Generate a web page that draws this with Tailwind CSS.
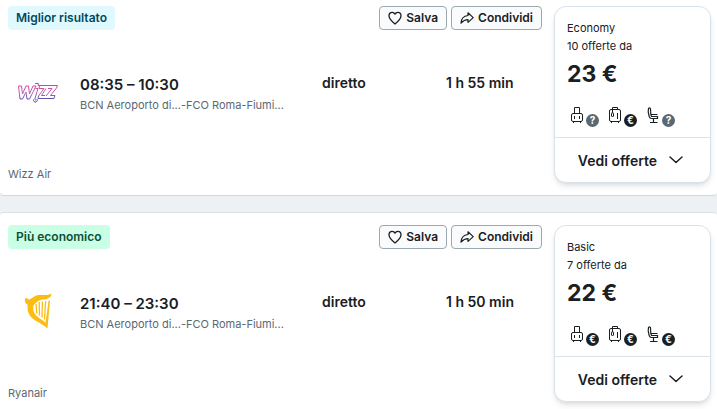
<!DOCTYPE html>
<html lang="it">
<head>
<meta charset="utf-8">
<meta name="viewport" content="width=device-width, initial-scale=1">
<title>Voli</title>
<script src="https://cdn.jsdelivr.net/npm/@tailwindcss/browser@4"></script>
</head>
<body class="bg-[#edf1f4] font-['Inter','Liberation_Sans',sans-serif] text-[#192024]">
<svg class="hidden" aria-hidden="true">
  <symbol id="heart" viewBox="0 0 14 14"><path d="M7 13C4.500 11 1 8.200 1 4.800C1 2.600 2.500 1.300 4.200 1.300C5.500 1.300 6.500 2 7 3.200C7.500 2 8.500 1.300 9.800 1.300C11.500 1.300 13 2.600 13 4.800C13 8.200 9.500 11 7 13Z" fill="none" stroke="currentColor" stroke-width="1.300" stroke-linejoin="round"/></symbol>
  <symbol id="share" viewBox="0 0 14 14"><path d="M8 1.800L13.200 6.600L8 11.400V8.700C4.800 8.700 3 10 1 12.200C1.200 8 3.500 4.900 8 4.500Z" fill="none" stroke="currentColor" stroke-width="1.200" stroke-linejoin="round"/></symbol>
  <symbol id="bag" viewBox="0 0 13 18"><g fill="none" stroke="currentColor"><path d="M4.500 7V1.500H9.500V7"/><rect x="1.500" y="7.500" width="11" height="8" rx="1.500"/><path d="M4.500 10V13M9.500 10V13M3.500 15.500V17M10.500 15.500V17"/></g></symbol>
  <symbol id="trolley" viewBox="0 0 13 18"><g fill="none" stroke="currentColor"><path d="M4.500 3.500V1.500H9.500V3.500"/><rect x="1.500" y="3.500" width="11" height="12" rx="1.500"/><path d="M9.500 7V13M3.500 15.500V17M10.500 15.500V17M4.500 3.500V6"/><path d="M4.500 6L3.500 8V10L4.500 11L5.500 10V8Z"/></g></symbol>
  <symbol id="seat" viewBox="0 0 13 18"><g fill="none" stroke="currentColor"><path d="M2.500 2.500C3.500 1.500 4.500 2 4.500 3L4.800 8.500L5.500 10.500H11.500V12.500H5.500C4 12.500 3.500 11.700 3.200 10.500L2.200 6Z" stroke-width="1.200"/><path d="M5 8.500H11.500M7.500 13V16.500M4 16.500H11.500" stroke-width="1.200"/></g></symbol>
  <symbol id="chevron" viewBox="0 0 14 8"><path d="M1 1L7 6.500L13 1" fill="none" stroke="currentColor" stroke-width="1.500" stroke-linecap="round" stroke-linejoin="round"/></symbol>
</svg>

<main class="flex flex-col gap-4">
  <article class="flex gap-3 rounded-b-sm border-b border-[#cfd8df] bg-white pt-1.5 pr-1.5 pb-3 pl-2">
    <div class="flex min-w-0 flex-1 flex-col">
      <div class="flex h-6 items-center justify-between">
        <span class="flex h-6 items-center rounded bg-[#dff9ff] px-2 text-[12px] font-semibold text-[#00495e]">Miglior risultato</span>
        <div class="flex gap-1">
          <button type="button" class="flex h-6 items-center gap-1 rounded border border-[#9ba8b0] bg-[#fafbfc] px-2 text-[12px] font-semibold"><svg class="size-3.5"><use href="#heart"/></svg>Salva</button>
          <button type="button" class="flex h-6 items-center gap-1 rounded border border-[#9ba8b0] bg-[#fafbfc] px-2 text-[12px] font-semibold"><svg class="size-3.5"><use href="#share"/></svg>Condividi</button>
        </div>
      </div>
      <div class="mt-11 flex items-start">
        <div class="flex h-9 w-15 shrink-0 items-center justify-center">
          <svg class="h-6 w-10" viewBox="0 0 40 24" role="img" aria-label="Wizz Air">
            <defs><linearGradient id="wizz" x1="0" y1="0" x2="0" y2="24" gradientUnits="userSpaceOnUse"><stop offset=".2" stop-color="#e0409c"/><stop offset=".55" stop-color="#b266b8"/><stop offset=".9" stop-color="#3746a8"/></linearGradient></defs>
            <g fill="none" stroke="url(#wizz)" stroke-width="1" stroke-linejoin="round">
              <path d="M.500 6H3.500L4.500 14L8 6H10.500L11.500 14L15 6H18L11.500 19H9L8 12L4.500 19H2Z"/>
              <path d="M17.500 8.500H20L17 18.500C16.600 20 18.200 20.500 18.500 19.500M15.500 19.500C15.500 23 19 23 19.500 19.500"/>
              <path d="M17 3.500H20.500L20 5.500H39.500L38.500 8L32.500 15.500H37L36 18.500H20L20.500 16L26 8.500H21L21.500 6M30 8.500H34L28 16M28 8.500L23.500 15.500H27"/>
            </g>
          </svg>
        </div>
        <div class="ml-3 w-[242px] shrink-0">
          <p class="text-[15px] leading-[22px] font-semibold">08:35 – 10:30</p>
          <p class="flex text-[11px] leading-[18px] text-[#5a6872]"><span>BCN Aeroporto di...</span><span>-</span><span>FCO Roma-Fiumi...</span></p>
        </div>
        <p class="w-31 shrink-0 text-[14px] leading-[18px] font-semibold">diretto</p>
        <p class="text-[14px] leading-[18px] font-semibold whitespace-nowrap">1 h 55 min</p>
      </div>
      <p class="mt-auto text-[11px] leading-[18px] text-[#5a6872]">Wizz Air</p>
    </div>
    <section class="w-[157px] shrink-0 rounded-xl border border-[#d9e2e8] bg-white shadow-md">
      <div class="px-3 pt-3 pb-2">
        <p class="text-[11px] leading-[18px]">Economy</p>
        <p class="text-[11px] leading-[18px]">10 offerte da</p>
        <p class="mt-[3px] text-[23px] leading-8 font-bold">23 €</p>
        <div class="mt-4 flex h-[23px] gap-[7px] pl-[3px]">
          <div class="flex w-[31px] gap-[3px]"><svg class="h-[18px] w-[13px] shrink-0"><use href="#bag"/></svg><span class="mt-2 flex size-[13px] shrink-0 items-center justify-center rounded-full bg-[#5a6872] text-[10px] font-bold text-white">?</span></div>
          <div class="flex w-[31px] gap-[3px]"><svg class="h-[18px] w-[13px] shrink-0"><use href="#trolley"/></svg><span class="mt-2 flex size-[13px] shrink-0 items-center justify-center rounded-full bg-[#192024] text-[10px] font-bold text-white">€</span></div>
          <div class="flex w-[31px] gap-[3px]"><svg class="h-[18px] w-[13px] shrink-0"><use href="#seat"/></svg><span class="mt-2 flex size-[13px] shrink-0 items-center justify-center rounded-full bg-[#5a6872] text-[10px] font-bold text-white">?</span></div>
        </div>
      </div>
      <button type="button" class="flex h-[45px] w-full items-center justify-center gap-3 border-t border-[#d9e2e8] pr-1 text-[14px] font-semibold">Vedi offerte<svg class="h-2 w-3.5"><use href="#chevron"/></svg></button>
    </section>
  </article>

  <article class="flex gap-3 rounded-t-sm border-t border-[#d9e2e8] bg-white pt-3 pr-1.5 pb-3 pl-2">
    <div class="flex min-w-0 flex-1 flex-col">
      <div class="flex h-6 items-center justify-between">
        <span class="flex h-6 items-center rounded bg-[#c9ffe5] px-2 text-[12px] font-semibold text-[#0b4f35]">Più economico</span>
        <div class="flex gap-1">
          <button type="button" class="flex h-6 items-center gap-1 rounded border border-[#9ba8b0] bg-[#fafbfc] px-2 text-[12px] font-semibold"><svg class="size-3.5"><use href="#heart"/></svg>Salva</button>
          <button type="button" class="flex h-6 items-center gap-1 rounded border border-[#9ba8b0] bg-[#fafbfc] px-2 text-[12px] font-semibold"><svg class="size-3.5"><use href="#share"/></svg>Condividi</button>
        </div>
      </div>
      <div class="mt-11 flex items-start">
        <div class="flex h-9 w-15 shrink-0 items-center justify-center">
          <svg class="h-9 w-7" viewBox="0 0 28 36" role="img" aria-label="Ryanair">
            <path d="M1 7C.500 6 1.500 5 2.500 5C3.500 5 4 5.800 4.500 6.500C8 6 10 2.500 15 2C20 1.500 23 3 27.500 .500C27.500 4 24 6.500 20 6.500C15 6.500 13 9 10.500 11C8.500 13 9 18 11 21C13.500 25 19 26.500 21.500 30L24.500 8L26 7L23.500 35.500C18 30 8.500 28 5 21C2.500 16.500 4.500 13 3 11C1.500 10.500 .500 8.500 1 7Z" fill="#fbbd12"/>
            <path d="M12 11L12.800 20.500M15.200 9L15.500 22.500M18.400 8.500L18 24.500M21.600 8L20.500 26.500" fill="none" stroke="#fbbd12" stroke-width="1.300"/>
          </svg>
        </div>
        <div class="ml-3 w-[242px] shrink-0">
          <p class="text-[15px] leading-[22px] font-semibold">21:40 – 23:30</p>
          <p class="flex text-[11px] leading-[18px] text-[#5a6872]"><span>BCN Aeroporto di...</span><span>-</span><span>FCO Roma-Fiumi...</span></p>
        </div>
        <p class="w-31 shrink-0 text-[14px] leading-[18px] font-semibold">diretto</p>
        <p class="text-[14px] leading-[18px] font-semibold whitespace-nowrap">1 h 50 min</p>
      </div>
      <p class="mt-auto text-[11px] leading-[18px] text-[#5a6872]">Ryanair</p>
    </div>
    <section class="w-[157px] shrink-0 rounded-xl border border-[#d9e2e8] bg-white shadow-md">
      <div class="px-3 pt-3 pb-2">
        <p class="text-[11px] leading-[18px]">Basic</p>
        <p class="text-[11px] leading-[18px]">7 offerte da</p>
        <p class="mt-[3px] text-[23px] leading-8 font-bold">22 €</p>
        <div class="mt-4 flex h-[23px] gap-[7px] pl-[3px]">
          <div class="flex w-[31px] gap-[3px]"><svg class="h-[18px] w-[13px] shrink-0"><use href="#bag"/></svg><span class="mt-2 flex size-[13px] shrink-0 items-center justify-center rounded-full bg-[#192024] text-[10px] font-bold text-white">€</span></div>
          <div class="flex w-[31px] gap-[3px]"><svg class="h-[18px] w-[13px] shrink-0"><use href="#trolley"/></svg><span class="mt-2 flex size-[13px] shrink-0 items-center justify-center rounded-full bg-[#192024] text-[10px] font-bold text-white">€</span></div>
          <div class="flex w-[31px] gap-[3px]"><svg class="h-[18px] w-[13px] shrink-0"><use href="#seat"/></svg><span class="mt-2 flex size-[13px] shrink-0 items-center justify-center rounded-full bg-[#192024] text-[10px] font-bold text-white">€</span></div>
        </div>
      </div>
      <button type="button" class="flex h-[45px] w-full items-center justify-center gap-3 border-t border-[#d9e2e8] pr-1 text-[14px] font-semibold">Vedi offerte<svg class="h-2 w-3.5"><use href="#chevron"/></svg></button>
    </section>
  </article>
</main>
</body>
</html>
